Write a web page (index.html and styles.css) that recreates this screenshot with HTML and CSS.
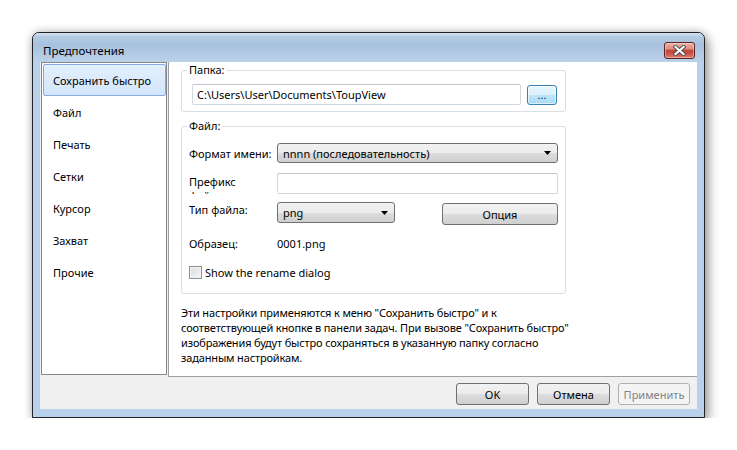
FILE: index.html
```html
<!DOCTYPE html>
<html lang="ru">
<head>
    <meta charset="UTF-8">
    <title>Предпочтения</title>
    <link rel="stylesheet" href="styles.css">
</head>
<body>
    <div class="desktop">
        <div class="window">
            <div class="titlebar">
                <span class="title">Предпочтения</span>
                <div class="close-btn">
                    <svg width="13" height="11" viewBox="0 0 13 11">
                        <path d="M2.5 2 L10.5 9 M10.5 2 L2.5 9" stroke="#4a4a4a" stroke-width="4" stroke-linecap="square"/>
                        <path d="M2.5 2 L10.5 9 M10.5 2 L2.5 9" stroke="#ffffff" stroke-width="2.2" stroke-linecap="square"/>
                    </svg>
                </div>
            </div>

            <div class="client">
                <div class="main">
                    <ul class="nav">
                        <li class="nav-item active">Сохранить быстро</li>
                        <li class="nav-item">Файл</li>
                        <li class="nav-item">Печать</li>
                        <li class="nav-item">Сетки</li>
                        <li class="nav-item">Курсор</li>
                        <li class="nav-item">Захват</li>
                        <li class="nav-item">Прочие</li>
                    </ul>

                    <div class="panel">
                        <fieldset class="group group-folder">
                            <legend>Папка:</legend>
                            <div class="path-row">
                                <div class="textbox path">C:\Users\User\Documents\ToupView</div>
                                <div class="btn btn-browse">...</div>
                            </div>
                        </fieldset>

                        <fieldset class="group group-file">
                            <legend>Файл:</legend>
                            <div class="file-rows">
                                <div class="row row-format">
                                    <span class="label">Формат имени:</span>
                                    <div class="combo combo-wide">
                                        <span>nnnn (последовательность)</span>
                                        <svg class="arrow" width="7" height="4" viewBox="0 0 7 4"><path d="M0 0 H7 L3.5 4 Z" fill="#000"/></svg>
                                    </div>
                                </div>
                                <div class="row row-prefix">
                                    <span class="label label-clip">Префикс файла:</span>
                                    <div class="textbox prefix"></div>
                                </div>
                                <div class="row row-type">
                                    <span class="label">Тип файла:</span>
                                    <div class="combo combo-type">
                                        <span>png</span>
                                        <svg class="arrow" width="7" height="4" viewBox="0 0 7 4"><path d="M0 0 H7 L3.5 4 Z" fill="#000"/></svg>
                                    </div>
                                    <div class="btn btn-option">Опция</div>
                                </div>
                                <div class="row row-sample">
                                    <span class="label">Образец:</span>
                                    <span>0001.png</span>
                                </div>
                                <div class="row row-check">
                                    <span class="checkbox"></span>
                                    <span>Show the rename dialog</span>
                                </div>
                            </div>
                        </fieldset>

                        <p class="note">
                            Эти настройки применяются к меню "Сохранить быстро" и к<br>
                            соответствующей кнопке в панели задач. При вызове "Сохранить быстро"<br>
                            изображения будут быстро сохраняться в указанную папку согласно<br>
                            заданным настройкам.
                        </p>
                    </div>
                </div>

                <div class="footer">
                    <div class="btn btn-footer">OK</div>
                    <div class="btn btn-footer">Отмена</div>
                    <div class="btn btn-footer btn-disabled">Применить</div>
                </div>
            </div>
        </div>
    </div>
</body>
</html>
```

FILE: styles.css
```css
* {
    box-sizing: border-box;
}

body {
    margin: 0;
    background-color: #ffffff;
    font-family: 'Noto Sans', 'Open Sans', sans-serif;
    font-size: 11px;
    color: #000000;
}

.desktop {
    padding: 32px 0 0 32px;
}

/* Окно */
.window {
    width: 673px;
    height: 386px;
    display: flex;
    flex-direction: column;
    background-color: #b9d1ea;
    border: 1px solid #1f2226;
    border-radius: 7px 7px 0 0;
    box-shadow: 0 1px 0 #5fc9d6, 0 0 10px rgba(0, 0, 0, 0.25), 4px 5px 12px rgba(0, 0, 0, 0.3);
}

.titlebar {
    height: 29px;
    flex-shrink: 0;
    display: flex;
    justify-content: space-between;
    align-items: flex-start;
    padding: 0 9px 0 10px;
    border-radius: 6px 6px 0 0;
    background: linear-gradient(#d8e3ef 0px, #b3c9e2 4px, #a7c1de 12px, #b3cbe5 22px, #bad1ea 29px);
}

.title {
    margin-top: 10px;
    line-height: 16px;
    font-size: 11.5px;
}

.close-btn {
    margin-top: 9px;
    width: 31px;
    height: 17px;
    display: flex;
    align-items: center;
    justify-content: center;
    border: 1px solid #5d231c;
    border-radius: 3px;
    background: linear-gradient(#eab3a8 0%, #dc8d7e 40%, #c0473a 50%, #c75446 70%, #dc8170 100%);
    box-shadow: inset 0 0 0 1px rgba(255, 255, 255, 0.35);
}

.client {
    height: 347px;
    margin: 0 7px;
    display: flex;
    flex-direction: column;
    background-color: #f0f0f0;
}

.main {
    height: 315px;
    display: flex;
    gap: 1px;
}

/* Список разделов */
.nav {
    list-style: none;
    margin: 0 0 0 1px;
    padding: 1px 0 0 1px;
    width: 126px;
    height: 313px;
    background-color: #ffffff;
    border: 1px solid #828790;
}

.nav-item {
    height: 32px;
    line-height: 31px;
    padding-left: 9px;
    border: 1px solid transparent;
    border-radius: 2px;
}

.nav-item.active {
    background: linear-gradient(#e2effc, #d3e6fb);
    border-color: #84acdd;
}

.panel {
    flex: 1;
    background-color: #ffffff;
    border-left: 1px solid #a0a0a0;
    border-bottom: 1px solid #a0a0a0;
    padding: 1px 0 0 12px;
}

/* Группы */
.group {
    width: 385px;
    margin: 0;
    padding: 0;
    min-width: 0;
    border: 1px solid #d5dfe5;
    border-radius: 3px;
}

.group legend {
    margin-left: 5px;
    padding: 0 2px;
    line-height: 14px;
}

.group-file {
    margin-top: 7px;
}

.path-row {
    display: flex;
    align-items: flex-start;
    gap: 6px;
    padding: 7px 8px 6px 10px;
}

.textbox {
    height: 21px;
    border: 1px solid #d3d7de;
    border-top-color: #bfc5ce;
    border-radius: 2px;
    background-color: #ffffff;
    padding-left: 4px;
    line-height: 19px;
    white-space: nowrap;
    overflow: hidden;
}

.path {
    flex: 1;
}

.btn {
    display: flex;
    align-items: center;
    justify-content: center;
    border: 1px solid #707070;
    border-radius: 3px;
    background: linear-gradient(#f2f2f2 0%, #ebebeb 50%, #dddddd 51%, #cfcfcf 100%);
}

.btn-browse {
    margin-top: 1px;
    width: 30px;
    height: 20px;
    border-color: #3c7fb1;
    background: linear-gradient(#eaf6fd 0%, #d9f0fc 50%, #bee6fd 51%, #a7d9f5 100%);
    box-shadow: inset 0 0 0 1px rgba(255, 255, 255, 0.6);
    color: #1b2d6b;
    line-height: 12px;
}

.file-rows {
    padding: 10px 7px 14px 7px;
}

.row {
    display: flex;
    align-items: center;
}

.label {
    width: 88px;
    flex-shrink: 0;
    white-space: nowrap;
}

.combo {
    height: 20px;
    display: flex;
    align-items: center;
    justify-content: space-between;
    padding: 0 6px 0 5px;
    border: 1px solid #707070;
    border-radius: 3px;
    background: linear-gradient(#f2f2f2 0%, #ebebeb 50%, #dddddd 51%, #cfcfcf 100%);
}

.combo-wide {
    flex: 1;
}

.combo-type {
    width: 118px;
    height: 21px;
}

.row-format {
    height: 20px;
}

.row-prefix {
    margin-top: 10px;
    align-items: flex-start;
}

/* второй строки подписи почти не видно, как в оригинале */
.label.label-clip {
    width: 60px;
    margin-right: 28px;
    margin-top: 2px;
    height: 19px;
    line-height: 14px;
    white-space: normal;
    overflow: hidden;
}

.prefix {
    flex: 1;
}

.row-type {
    margin-top: 8px;
    height: 23px;
    align-items: flex-start;
}

.btn-option {
    margin-left: auto;
    margin-top: 1px;
    width: 116px;
    height: 22px;
}

.row-sample {
    margin-top: 11px;
    height: 15px;
}

.row-check {
    margin-top: 14px;
    height: 14px;
    gap: 3px;
}

.checkbox {
    width: 13px;
    height: 13px;
    border: 1px solid #8e8f8f;
    background: linear-gradient(135deg, #dcdcdc, #f6f6f6);
    box-shadow: inset 0 0 0 1px #f4f4f4;
}

.note {
    margin: 11px 0 0 0;
    line-height: 15px;
    letter-spacing: -0.15px;
    white-space: nowrap;
}

/* Нижняя панель с кнопками */
.footer {
    flex: 1;
    display: flex;
    justify-content: flex-end;
    align-items: flex-start;
    gap: 8px;
    padding: 6px 7px 0 0;
}

.btn-footer {
    width: 73px;
    height: 22px;
}

.btn-disabled {
    width: 72px;
    color: #838383;
    border-color: #adb2b5;
    background: #f4f4f4;
}
```
